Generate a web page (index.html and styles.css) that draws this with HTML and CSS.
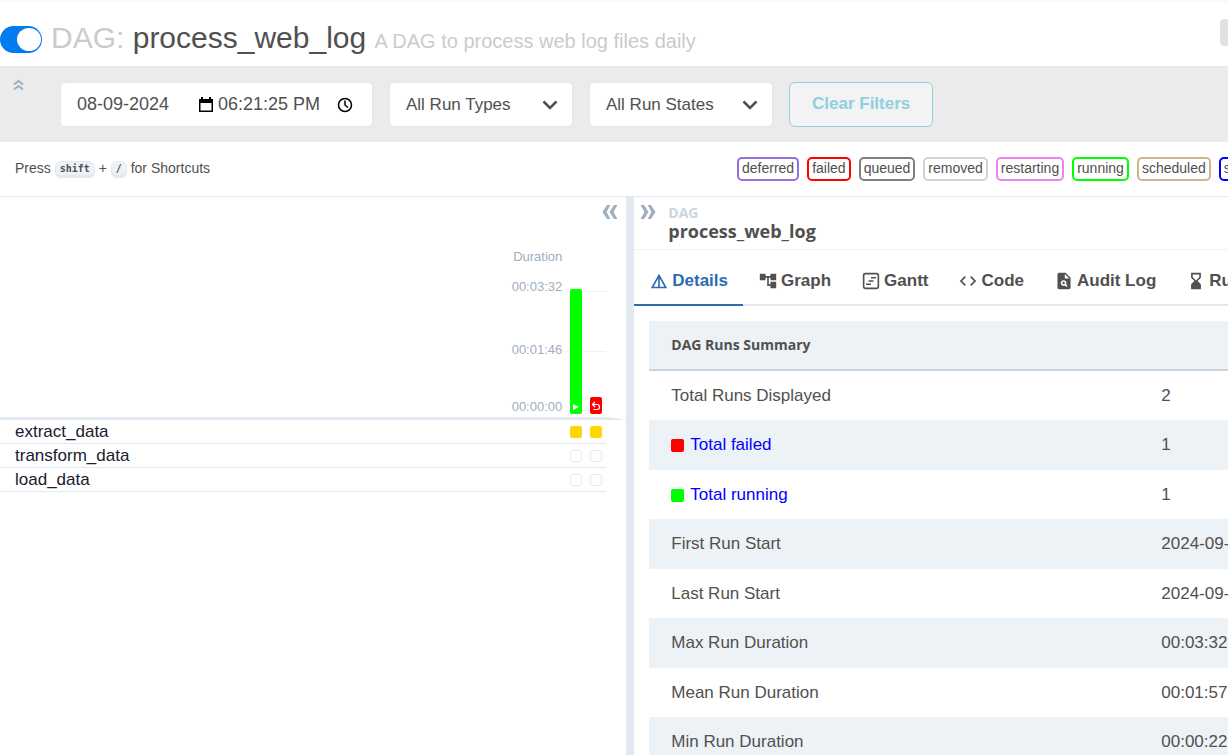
FILE: index.html
```html
<!DOCTYPE html>
<html lang="en">
<head>
<meta charset="utf-8">
<title>process_web_log - Grid</title>
<link rel="stylesheet" href="styles.css">
</head>
<body>
<div class="app">
  <header class="dag-header">
    <input class="toggle" type="checkbox" checked aria-label="Pause or unpause DAG">
    <h1 class="dag-title"><span class="muted">DAG:</span> process_web_log <small class="muted">A DAG to process web log files daily</small></h1>
    <button class="schedule" type="button" aria-label="Schedule"></button>
  </header>

  <section class="filters">
    <button class="icon-button collapse-filters" type="button" aria-label="Collapse filters">
      <svg width="11" height="12" viewBox="0 0 11 12"><path d="M1 5.500l4.500-3.500L10 5.500M1 10.500l4.500-3.500L10 10.500"/></svg>
    </button>
    <div class="field date-field">
      <input class="date-input" type="text" value="08-09-2024" aria-label="Base date">
      <svg class="calendar" width="14" height="16" viewBox="0 0 14 16"><path d="M2 0h2v2h6V0h2v2h2v13H0V2h2zM1.500 6v7.500h11V6z" fill-rule="evenodd"/></svg>
      <input class="time-input" type="text" value="06:21:25 PM" aria-label="Base time">
      <svg class="clock" width="16" height="16" viewBox="0 0 16 16"><circle cx="8" cy="8" r="6.500"/><path d="M8 3.500V8l3 2.500"/></svg>
    </div>
    <div class="field select-field">
      <select aria-label="Run types"><option>All Run Types</option></select>
      <svg class="caret" width="16" height="10" viewBox="0 0 16 10"><path d="M1.500 1.500L8 8l6.500-6.500"/></svg>
    </div>
    <div class="field select-field">
      <select aria-label="Run states"><option>All Run States</option></select>
      <svg class="caret" width="16" height="10" viewBox="0 0 16 10"><path d="M1.500 1.500L8 8l6.500-6.500"/></svg>
    </div>
    <button class="clear" type="button">Clear Filters</button>
  </section>

  <section class="legend-row">
    <p class="hint">Press <kbd>shift</kbd> + <kbd>/</kbd> for Shortcuts</p>
    <div class="legend">
      <span class="state deferred">deferred</span>
      <span class="state failed">failed</span>
      <span class="state queued">queued</span>
      <span class="state removed">removed</span>
      <span class="state restarting">restarting</span>
      <span class="state running">running</span>
      <span class="state scheduled">scheduled</span>
      <span class="state skipped">skipped</span>
    </div>
  </section>

  <main class="main">
    <section class="grid-panel">
      <div class="grid-tools">
        <button class="icon-button" type="button" aria-label="Collapse details">
          <svg width="16" height="14" viewBox="0 0 16 14"><path class="solid" d="M5 0h3.500L4.500 7l4 7H5L.5 7zM12 0h3.500l-4 7 4 7H12L7.500 7z"/></svg>
        </button>
      </div>
      <div class="chart">
        <div class="axis">
          <span class="axis-title">Duration</span>
          <span class="tick top">00:03:32</span>
          <span class="tick middle">00:01:46</span>
          <span class="tick">00:00:00</span>
        </div>
        <div class="plot">
          <div class="lines"><i></i><i></i></div>
          <div class="bars">
            <div class="bar running-bar"><svg width="6" height="8" viewBox="0 0 6 8"><path d="M0 1l6 3-6 3z"/></svg></div>
            <div class="bar failed-bar"><svg width="10" height="10" viewBox="0 0 10 10"><path class="undo" d="M4 1L1.500 3.500 4 6M1.500 3.500H6a2.500 2.500 0 010 5H2.500"/></svg></div>
          </div>
        </div>
      </div>
      <div class="shelf"></div>
      <ul class="tasks">
        <li><span>extract_data</span><i class="cell retry"></i><i class="cell retry"></i></li>
        <li><span>transform_data</span><i class="cell"></i><i class="cell"></i></li>
        <li><span>load_data</span><i class="cell"></i><i class="cell"></i></li>
      </ul>
    </section>

    <div class="divider"></div>

    <section class="details">
      <header class="crumb">
        <button class="icon-button" type="button" aria-label="Collapse grid">
          <svg width="16" height="14" viewBox="0 0 16 14"><path class="solid" d="M4 0H.5l4 7-4 7H4l4.500-7zM11 0H7.500l4 7-4 7H11l4.500-7z"/></svg>
        </button>
        <h2><span>DAG</span>process_web_log</h2>
      </header>
      <nav class="tabs">
        <button class="tab active" type="button"><svg viewBox="1 1 22 22"><path d="M12 3L2 21h20L12 3zm1 5.920L18.600 19H13V8.920zm-2 0V19H5.400L11 8.920z"/></svg>Details</button>
        <button class="tab" type="button"><svg viewBox="1 1 22 22"><path d="M22 11V3h-7v3H9V3H2v8h7V8h2v10h4v3h7v-8h-7v3h-2V8h2v3z"/></svg>Graph</button>
        <button class="tab" type="button"><svg viewBox="1 1 22 22"><path fill-rule="evenodd" d="M5 2h14a3 3 0 013 3v14a3 3 0 01-3 3H5a3 3 0 01-3-3V5a3 3 0 013-3zm0 2a1 1 0 00-1 1v14a1 1 0 001 1h14a1 1 0 001-1V5a1 1 0 00-1-1zM12 7h6v2h-6zM9 11h6v2H9zM6 15h6v2H6z"/></svg>Gantt</button>
        <button class="tab" type="button"><svg viewBox="1 1 22 22"><path d="M9.400 16.600L4.800 12l4.600-4.600L8 6l-6 6 6 6 1.400-1.400zm5.200 0l4.600-4.600-4.600-4.600L16 6l6 6-6 6-1.400-1.400z"/></svg>Code</button>
        <button class="tab" type="button"><svg viewBox="1 1 22 22"><path fill-rule="evenodd" d="M14 2H6c-1.100 0-2 .9-2 2v16c0 1.100.89 2 1.990 2H18c1.100 0 2-.9 2-2V8l-6-6zm1.040 17.450l-1.880-1.880c-1.330.71-3.010.53-4.130-.59-1.370-1.370-1.370-3.580 0-4.950 1.370-1.370 3.580-1.370 4.950 0 1.120 1.120 1.310 2.800.59 4.130l1.880 1.880zM13 9V3.500L18.500 9zM11.500 13a1.500 1.500 0 100 3 1.500 1.500 0 000-3z"/></svg>Audit Log</button>
        <button class="tab" type="button"><svg viewBox="1 1 22 22"><path d="M18 22l-.01-6L14 12l3.990-4.010L18 2H6v6l4 4-4 3.990V22h12zM8 7.500V4h8v3.500l-4 4-4-4z"/></svg>Run Duration</button>
      </nav>
      <div class="summary">
        <table>
          <thead><tr><th scope="col" colspan="2">DAG Runs Summary</th></tr></thead>
          <tbody>
            <tr><td>Total Runs Displayed</td><td>2</td></tr>
            <tr><td><i class="swatch red"></i><a href="#failed">Total failed</a></td><td>1</td></tr>
            <tr><td><i class="swatch lime"></i><a href="#running">Total running</a></td><td>1</td></tr>
            <tr><td>First Run Start</td><td>2024-09-08, 18:17:53 UTC</td></tr>
            <tr><td>Last Run Start</td><td>2024-09-08, 18:21:03 UTC</td></tr>
            <tr><td>Max Run Duration</td><td>00:03:32</td></tr>
            <tr><td>Mean Run Duration</td><td>00:01:57</td></tr>
            <tr><td>Min Run Duration</td><td>00:00:22</td></tr>
          </tbody>
        </table>
      </div>
    </section>
  </main>
</div>
</body>
</html>
```
FILE: styles.css
```css
* { box-sizing: border-box; }

body {
  margin: 0;
  overflow: hidden;
  background: #fff;
  color: #51504f;
  font: 17px/24px "Liberation Sans", Arial, sans-serif;
}

button, input, select { font: inherit; color: inherit; }

.app {
  display: flex;
  flex-direction: column;
  height: 100vh;
}

.dag-header {
  display: flex;
  flex: none;
  align-items: center;
  gap: 9px;
  padding: 12px 0 0;
  height: 67px;
  border-bottom: 1px solid #e2e8f0;
  background: linear-gradient(#f8f8f8, #fff 4px);
}

.toggle {
  appearance: none;
  flex: none;
  display: flex;
  justify-content: flex-end;
  width: 42px;
  height: 27px;
  margin: 0;
  padding: 2px 1px;
  border-radius: 14px;
  background: #017cee;
}
.toggle::before {
  content: "";
  width: 24px;
  height: 23px;
  border-radius: 50%;
  background: #fff;
}

.dag-title {
  flex: 1;
  margin: 0;
  font-size: 30px;
  font-weight: 400;
  line-height: 32px;
  white-space: nowrap;
}
.dag-title small { font-size: 20px; }
.muted { color: #cbcbcb; }

.schedule {
  align-self: flex-start;
  width: 8px;
  height: 27px;
  margin-top: 7px;
  padding: 0;
  border: 0;
  border-radius: 4px 0 0 4px;
  background: #e2e2e2;
}

.icon-button {
  display: flex;
  padding: 0;
  border: 0;
  background: none;
}
.icon-button path {
  fill: none;
  stroke: #a0aec0;
  stroke-width: 2;
}
.icon-button .solid { fill: #a0aec0; stroke: none; }

.filters {
  display: flex;
  flex: none;
  gap: 16px;
  padding: 15px 13px;
  background: #ebebeb;
}
.collapse-filters {
  align-self: flex-start;
  width: 31px;
  margin-top: -3px;
}
.field {
  display: flex;
  align-items: center;
  height: 45px;
  border: 1px solid #e2e8f0;
  border-radius: 5px;
  background: #fff;
}
.date-field { width: 313px; padding: 0 16px; font-size: 18px; }
.date-field input {
  min-width: 0;
  padding: 0 0 2px;
  border: 0;
  background: none;
}
.date-input { width: 122px; }
.time-input { width: 119px; margin-left: 5px; }
.calendar { fill: #000; }
.clock { fill: none; stroke: #000; stroke-width: 1.5; }

.select-field { position: relative; width: 184px; }
.select-field + .select-field, .clear { flex: none; }
.select-field select {
  appearance: none;
  width: 100%;
  height: 100%;
  padding: 0 16px;
  border: 0;
  border-radius: 5px;
  background: none;
}
.caret {
  position: absolute;
  right: 14px;
  pointer-events: none;
  fill: none;
  stroke: #51504f;
  stroke-width: 2.5;
}
.clear {
  height: 45px;
  padding: 0 22px 2px;
  border: 1px solid #90cfdd;
  border-radius: 6px;
  background: #f3f3f3;
  color: #90cfdd;
  font-weight: 700;
}

.legend-row {
  display: flex;
  flex: none;
  align-items: center;
  justify-content: space-between;
  height: 55px;
  padding-left: 15px;
  border-bottom: 1px solid #e2e8f0;
  font-size: 14px;
}
.hint { margin: 0; padding-bottom: 2px; white-space: nowrap; }
kbd {
  display: inline-block;
  padding: 0 4px;
  border: 1px solid #e2e8f0;
  border-bottom-width: 3px;
  border-radius: 6px;
  background: #edf2f7;
  font: 700 10px/13px "DejaVu Sans Mono", monospace;
  vertical-align: 1px;
}
.legend {
  display: flex;
  flex: 0 0 491px;
  gap: 8px;
  overflow: hidden;
}
.state {
  flex: none;
  height: 24px;
  padding: 0 3px;
  border: 2px solid;
  border-radius: 5px;
  line-height: 19px;
}
.deferred { border-color: mediumpurple; }
.failed { border-color: red; }
.queued { border-color: gray; }
.removed { border-color: lightgrey; }
.restarting { border-color: violet; }
.running { border-color: lime; }
.scheduled { border-color: tan; }
.skipped { border-color: blue; }

.main {
  display: flex;
  flex: 1;
  min-height: 0;
}
.grid-panel { flex: 0 0 51%; min-width: 0; }
.grid-tools {
  display: flex;
  justify-content: flex-end;
  padding: 8px 8px 0;
}
.chart {
  display: flex;
  justify-content: flex-end;
  gap: 4px;
  padding: 27px 20px 0 0;
}
.axis {
  display: flex;
  flex-direction: column;
  height: 171px;
  color: #a0aec0;
  font-size: 13px;
  line-height: 22px;
  text-align: right;
}
.top { margin-top: 8px; }
.middle { margin: 41px 0 35px; }
.plot {
  display: grid;
  align-self: flex-end;
  width: 40px;
  height: 128px;
  margin-bottom: 2px;
}
.lines, .bars { grid-area: 1 / 1; }
.lines {
  display: grid;
  grid-template-rows: 1fr 1fr;
  margin: 4px 0;
  border-bottom: 1px solid #edf2f7;
}
.lines i { border-top: 1px solid #edf2f7; }
.bars {
  display: flex;
  align-items: flex-end;
  gap: 8px;
  padding: 0 4px 1px;
}
.bar {
  display: flex;
  align-items: flex-end;
  justify-content: center;
  width: 12px;
  padding-bottom: 3px;
  border-radius: 2px;
}
.bar path { fill: #fff; }
.bar .undo { fill: none; stroke: #fff; stroke-width: 1.2; }
.running-bar { height: 125px; background: lime; }
.failed-bar { height: 17px; background: red; }
.shelf {
  height: 3px;
  background: #e2e8f0;
  clip-path: polygon(0 0, 97% 0, 100% 100%, 0 100%);
}
.tasks {
  margin: 0 20px 0 0;
  padding: 0;
  list-style: none;
  color: #1a202c;
}
.tasks li {
  display: flex;
  align-items: center;
  gap: 8px;
  height: 24px;
  padding: 0 4px 0 15px;
  border-bottom: 1px solid #e2e8f0;
}
.tasks span { flex: 1; }
.cell {
  width: 12px;
  height: 12px;
  border: 1px solid #e2e8f0;
  border-radius: 2px;
}
.retry { border-color: gold; background: gold; }

.divider { flex: 0 0 8px; background: #e2e8f0; }

.details { flex: 1; min-width: 0; overflow: hidden; }
.crumb {
  display: flex;
  align-items: flex-start;
  gap: 12px;
  padding: 8px 6px;
  height: 53px;
  border-bottom: 1px solid #edf2f7;
}
.crumb h2 {
  margin: 0;
  font: 700 18px/20px "Open Sans", "Noto Sans", sans-serif;
}
.crumb h2 span {
  display: block;
  color: #cbd5e0;
  font-size: 14px;
  line-height: 16px;
}
.tabs {
  display: flex;
  height: 56px;
  border-bottom: 2px solid #e2e8f0;
}
.tab {
  display: flex;
  flex: none;
  align-items: center;
  gap: 4px;
  height: 56px;
  padding: 8px 15px 0 16px;
  border: 0;
  border-bottom: 2px solid transparent;
  background: none;
  font-weight: 700;
}
.tab svg { width: 18px; height: 18px; fill: currentColor; }
.active { border-color: #2b6cb0; color: #2b6cb0; }

.summary { padding: 15px 0 0 15px; }
.summary table {
  width: 980px;
  border-collapse: separate;
  border-spacing: 0;
  table-layout: fixed;
}
.summary th {
  height: 50px;
  padding: 0 22px;
  border-bottom: 2px solid #cbd5e0;
  background: #edf2f7;
  font: 700 14px/20px "Open Sans", "Noto Sans", sans-serif;
  text-align: left;
}
.summary td { height: 49px; padding: 0 22px; }
.summary tbody tr:nth-child(even) td { height: 50px; background: #edf2f7; }
.summary a { color: #00f; text-decoration: none; }
.swatch {
  display: inline-block;
  width: 13px;
  height: 13px;
  margin-right: 6px;
  border-radius: 2px;
  vertical-align: -2px;
}
.red { background: red; }
.lime { background: lime; }
```
